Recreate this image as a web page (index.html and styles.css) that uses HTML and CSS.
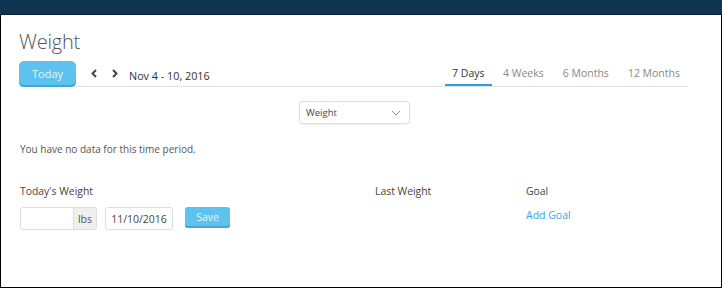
FILE: index.html
```html
<!DOCTYPE html>
<html>
<head>
<meta charset="utf-8">
<link rel="stylesheet" href="styles.css">
</head>
<body>
<div class="topbar"></div>
<div class="frame">
  <main class="content">
    <h1 class="title">Weight</h1>
    <div class="toolbar">
      <div class="left">
        <button class="btn-today">Today</button>
        <span class="chev"><svg width="6" height="9" viewBox="0 0 6 9"><path d="M5 1 L1.5 4.5 L5 8" fill="none" stroke="#444" stroke-width="2"/></svg></span>
        <span class="chev"><svg width="6" height="9" viewBox="0 0 6 9"><path d="M1 1 L4.5 4.5 L1 8" fill="none" stroke="#444" stroke-width="2"/></svg></span>
        <span class="range">Nov 4 - 10, 2016</span>
      </div>
      <nav class="tabs">
        <span class="tab active">7 Days</span>
        <span class="tab">4 Weeks</span>
        <span class="tab">6 Months</span>
        <span class="tab">12 Months</span>
      </nav>
    </div>
    <div class="select-row">
      <div class="select">
        <span>Weight</span>
        <svg width="10" height="6" viewBox="0 0 10 6"><path d="M1 1 L5 5 L9 1" fill="none" stroke="#888" stroke-width="1"/></svg>
      </div>
    </div>
    <p class="nodata">You have no data for this time period.</p>
    <div class="stats">
      <div class="col col-today">
        <div class="label">Today's Weight</div>
        <div class="form">
          <div class="input-group"><span class="field"></span><span class="addon">lbs</span></div>
          <div class="date">11/10/2016</div>
          <button class="btn-save">Save</button>
        </div>
      </div>
      <div class="col col-last">
        <div class="label">Last Weight</div>
      </div>
      <div class="col col-goal">
        <div class="label">Goal</div>
        <a class="add-goal">Add Goal</a>
      </div>
    </div>
  </main>
</div>
</body>
</html>
```
FILE: styles.css
```css
* { box-sizing: border-box; }
html, body { margin: 0; padding: 0; background: #fff; }
body {
  width: 722px; height: 288px; overflow: hidden;
  font-family: "Open Sans", "Noto Sans", sans-serif;
  color: #444;
  display: flex; flex-direction: column;
}
.topbar {
  height: 15px;
  background: #0f3350;
  border-bottom: 1px solid #0a2338;
}
.frame {
  flex: 1;
  border: 1px solid #000;
  border-top: none;
}
.content { padding: 0 33px 0 18px; }
.title {
  margin: 14px 0 0;
  font-size: 20px; font-weight: 300; color: #555;
  line-height: 26px; letter-spacing: -0.2px;
}
.toolbar {
  margin-top: 6px;
  display: flex; justify-content: space-between; align-items: flex-end;
  border-bottom: 1px solid #e3e3e3;
  height: 26px;
}
.left { display: flex; align-items: center; height: 26px; }
.btn-today {
  width: 57px; height: 26px;
  border: none; border-radius: 5px;
  background: #5ec2ee;
  box-shadow: inset 0 -2px 0 #47a6d0;
  color: #e6f5fc; font: 400 11px "Open Sans", sans-serif;
  padding: 0 0 2px;
  position: relative; top: 1px;
}
.chev { display: flex; margin-left: 15px; width: 6px; }
.chev + .chev { margin-left: 15px; }
.range { margin-left: 11px; font-size: 10.8px; color: #333; position: relative; top: 2px; }
.tabs { display: flex; height: 26px; }
.tab {
  font-size: 10.5px; color: #888; padding: 3px 9.5px 0;
  line-height: 21px;
}
.tab:last-child { padding-right: 8px; }
.tab.active { color: #333; border-bottom: 2px solid #2b9ee0; padding: 3px 7px 0; margin-right: 2px; }
.select-row { display: flex; justify-content: center; margin-top: 14px; padding-left: 2px; }
.select {
  width: 111px; height: 23px;
  border: 1px solid #ddd; border-radius: 3px;
  display: flex; align-items: center; justify-content: space-between;
  padding: 0 8px 0 6px;
  font-size: 9.5px; color: #444;
  box-shadow: 0 1px 1px rgba(0,0,0,0.05);
}
.nodata { margin: 18px 0 0 1px; font-size: 10px; color: #555; line-height: 14px; }
.stats { display: flex; margin-top: 28px; padding-left: 1px; }
.label { font-size: 10.4px; color: #444; line-height: 15px; }
.col-today { width: 355px; }
.col-last { width: 151px; }
.form { display: flex; align-items: flex-start; margin-top: 8px; }
.input-group {
  display: flex; width: 77px; height: 23px;
  border: 1px solid #ddd; border-radius: 3px; overflow: hidden;
}
.field { flex: 1; }
.addon {
  width: 23px; background: #efefef; border-left: 1px solid #ddd;
  font-size: 10.5px; color: #555; display: flex; align-items: center; justify-content: center;
}
.date {
  margin-left: 8px; width: 68px; height: 23px;
  border: 1px solid #ddd; border-radius: 3px;
  font-size: 10.5px; color: #444;
  display: flex; align-items: center; justify-content: center;
}
.btn-save {
  margin-left: 12px; width: 45px; height: 21px;
  border: none; border-radius: 3px;
  background: #5ec2ee; box-shadow: inset 0 -2px 0 #47a6d0;
  color: #e6f5fc; font: 400 10.5px "Open Sans", sans-serif; padding: 0 0 2px;
}
.add-goal { display: block; margin-top: 9px; font-size: 10.5px; color: #3aa5e6; }
```
